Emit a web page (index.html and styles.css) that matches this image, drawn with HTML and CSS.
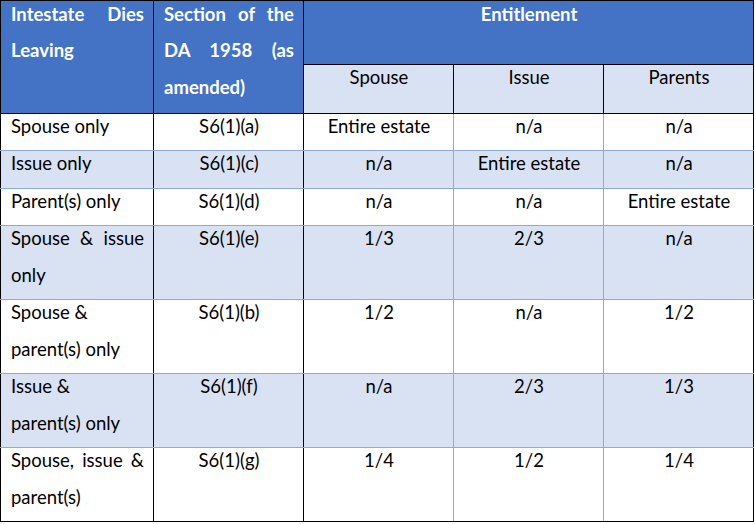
FILE: index.html
```html
<!DOCTYPE html>
<html lang="en">
<head>
<meta charset="utf-8">
<title>Intestacy entitlement</title>
<link rel="stylesheet" href="styles.css">
</head>
<body>
<table class="grid">
  <colgroup>
    <col class="c1"><col class="c2"><col class="c3"><col class="c4"><col class="c5">
  </colgroup>
  <thead>
    <tr class="h1">
      <th rowspan="2" class="hmain"><div class="t ht"><div class="j">Intestate Dies</div><div>Leaving</div></div></th>
      <th rowspan="2" class="hmain"><div class="t ht"><div class="j">Section of the</div><div class="j">DA 1958 (as</div><div>amended)</div></div></th>
      <th colspan="3" class="hmain ctr"><div class="t ht">Entitlement</div></th>
    </tr>
    <tr class="h2">
      <th class="hsub"><div class="t">Spouse</div></th>
      <th class="hsub"><div class="t">Issue</div></th>
      <th class="hsub"><div class="t">Parents</div></th>
    </tr>
  </thead>
  <tbody>
    <tr>
      <td class="lbl"><div class="t">Spouse only</div></td>
      <td class="sec"><div class="t">S6(1)(a)</div></td>
      <td><div class="t">Entire estate</div></td>
      <td><div class="t">n/a</div></td>
      <td><div class="t">n/a</div></td>
    </tr>
    <tr class="alt">
      <td class="lbl"><div class="t">Issue only</div></td>
      <td class="sec"><div class="t">S6(1)(c)</div></td>
      <td><div class="t">n/a</div></td>
      <td><div class="t">Entire estate</div></td>
      <td><div class="t">n/a</div></td>
    </tr>
    <tr>
      <td class="lbl"><div class="t">Parent(s) only</div></td>
      <td class="sec"><div class="t">S6(1)(d)</div></td>
      <td><div class="t">n/a</div></td>
      <td><div class="t">n/a</div></td>
      <td><div class="t">Entire estate</div></td>
    </tr>
    <tr class="alt">
      <td class="lbl"><div class="t"><div class="j">Spouse &amp; issue</div><div>only</div></div></td>
      <td class="sec"><div class="t">S6(1)(e)</div></td>
      <td><div class="t">1/3</div></td>
      <td><div class="t">2/3</div></td>
      <td><div class="t">n/a</div></td>
    </tr>
    <tr>
      <td class="lbl"><div class="t">Spouse &amp;<br>parent(s) only</div></td>
      <td class="sec"><div class="t">S6(1)(b)</div></td>
      <td><div class="t">1/2</div></td>
      <td><div class="t">n/a</div></td>
      <td><div class="t">1/2</div></td>
    </tr>
    <tr class="alt">
      <td class="lbl"><div class="t">Issue &amp;<br>parent(s) only</div></td>
      <td class="sec"><div class="t">S6(1)(f)</div></td>
      <td><div class="t">n/a</div></td>
      <td><div class="t">2/3</div></td>
      <td><div class="t">1/3</div></td>
    </tr>
    <tr class="last">
      <td class="lbl"><div class="t"><div class="j">Spouse, issue &amp;</div><div>parent(s)</div></div></td>
      <td class="sec"><div class="t">S6(1)(g)</div></td>
      <td><div class="t">1/4</div></td>
      <td><div class="t">1/2</div></td>
      <td><div class="t">1/4</div></td>
    </tr>
  </tbody>
</table>
</body>
</html>
```

FILE: styles.css
```css
html, body {
  margin: 0;
  padding: 0;
  background: #ffffff;
}

body {
  font-family: Lato, "Liberation Sans", sans-serif;
  font-size: 18.5px;
  color: #000000;
}

.grid {
  border-collapse: collapse;
  table-layout: fixed;
  width: 753px;
  border: 1px solid #000000;
}

.c1 { width: 153px; }
.c2 { width: 150px; }
.c3 { width: 150px; }
.c4 { width: 150px; }
.c5 { width: 150px; }

.grid th,
.grid td {
  padding: 0 9px 0 10px;
  vertical-align: top;
  line-height: 36.45px;
  text-align: center;
  font-weight: normal;
}

.t {
  margin-top: -6px;
  margin-bottom: 6px;
}

.t.ht {
  margin-top: -5px;
  margin-bottom: 5px;
}

.j {
  text-align: justify;
  text-align-last: justify;
}

/* header */
.grid th.hmain {
  background: #4472c4;
  color: #ffffff;
  font-weight: bold;
  text-align: left;
  border: 1px solid #000000;
}

.grid th.hmain.ctr {
  text-align: center;
}

.h1 { height: 64px; }
.h2 { height: 49px; }

.grid th.hsub {
  background: #d9e2f3;
  border: 1px solid #000000;
}

/* body */
.grid tbody td {
  border: 1px solid #8eaadb;
}

.grid tbody tr:first-child td {
  border-top: 1px solid #000000;
}

.grid tbody tr.last td {
  border-bottom: 1px solid #000000;
}

.grid tbody td.lbl {
  text-align: left;
  border-left: 1px solid #000000;
  border-right: 1px solid #000000;
}

.grid tbody td.sec {
  border-right: 1px solid #000000;
}

.grid tbody td:last-child {
  border-right: 1px solid #000000;
}

.alt td {
  background: #d9e2f3;
}
```
